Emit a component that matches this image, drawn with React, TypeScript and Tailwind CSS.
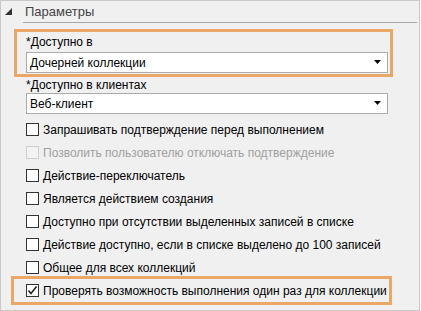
import React from "react";

const font = { fontFamily: '"Liberation Sans", Arial, sans-serif' };

function Arrow() {
  return (
    <svg width="8" height="5" viewBox="0 0 8 5" className="block">
      <path d="M0 0 H7 L3.5 4 Z" fill="#000" />
    </svg>
  );
}

function Select({ value }: { value: string }) {
  return (
    <div className="w-[362px] h-[21px] border border-[#acacac] bg-white flex items-center justify-between pl-[3px] pr-[5px] text-[12px] text-black">
      <span>{value}</span>
      <div className="mt-[-1px]">
        <Arrow />
      </div>
    </div>
  );
}

function Check({
  label,
  checked = false,
  disabled = false,
}: {
  label: string;
  checked?: boolean;
  disabled?: boolean;
}) {
  return (
    <div className="h-[23px] flex items-center pl-[12px]">
      <div
        className={
          disabled
            ? "w-[13px] h-[13px] border border-[#cfcfcf] bg-[#f3f3f3] shrink-0"
            : "w-[13px] h-[13px] border border-[#333333] bg-white shrink-0 flex items-center justify-center"
        }
      >
        {checked && (
          <svg width="11" height="11" viewBox="0 0 11 11" className="block">
            <path d="M1.5 5.5 L4 8.5 L9.5 1.5" fill="none" stroke="#222" strokeWidth="1.6" />
          </svg>
        )}
      </div>
      <span
        className={
          disabled
            ? "ml-[4px] text-[12px] text-[#a0a0a0] whitespace-nowrap"
            : "ml-[4px] text-[12px] text-black whitespace-nowrap"
        }
      >
        {label}
      </span>
    </div>
  );
}

export default function App() {
  return (
    <div
      style={font}
      className="w-[420px] h-[311px] border border-[#c8c8c8] bg-[#f0f0f0] overflow-hidden"
    >
      <div className="h-[21px] flex items-center">
        <svg width="8" height="8" viewBox="0 0 8 8" className="ml-[4px] mt-[1px] block">
          <path d="M7 0 V7 H0 Z" fill="#333" />
        </svg>
        <span className="ml-[12px] text-[13px] text-[#444444]">Параметры</span>
      </div>
      <div className="ml-[22px] mr-[2px] h-px bg-[#a8a8a8]" />
      <div className="ml-[13px] mt-[6px] w-[379px] border-[3px] border-[#eba768] pl-[9px] pb-[1px]">
        <div className="h-[20px] leading-[20px] text-[12px] text-black">*Доступно в</div>
        <Select value="Дочерней коллекции" />
      </div>
      <div className="ml-[25px]">
        <div className="h-[16px] leading-[16px] text-[12px] text-black">*Доступно в клиентах</div>
        <Select value="Веб-клиент" />
      </div>
      <div className="mt-[4px] ml-[13px]">
        <Check label="Запрашивать подтверждение перед выполнением" />
        <Check label="Позволить пользователю отключать подтверждение" disabled />
        <Check label="Действие-переключатель" />
        <Check label="Является действием создания" />
        <Check label="Доступно при отсутствии выделенных записей в списке" />
        <Check label="Действие доступно, если в списке выделено до 100 записей" />
        <Check label="Общее для всех коллекций" />
        <div className="-ml-[3px] -mt-[3px] w-[381px] border-[3px] border-[#eba768]">
          <Check label="Проверять возможность выполнения один раз для коллекции" checked />
        </div>
      </div>
    </div>
  );
}
